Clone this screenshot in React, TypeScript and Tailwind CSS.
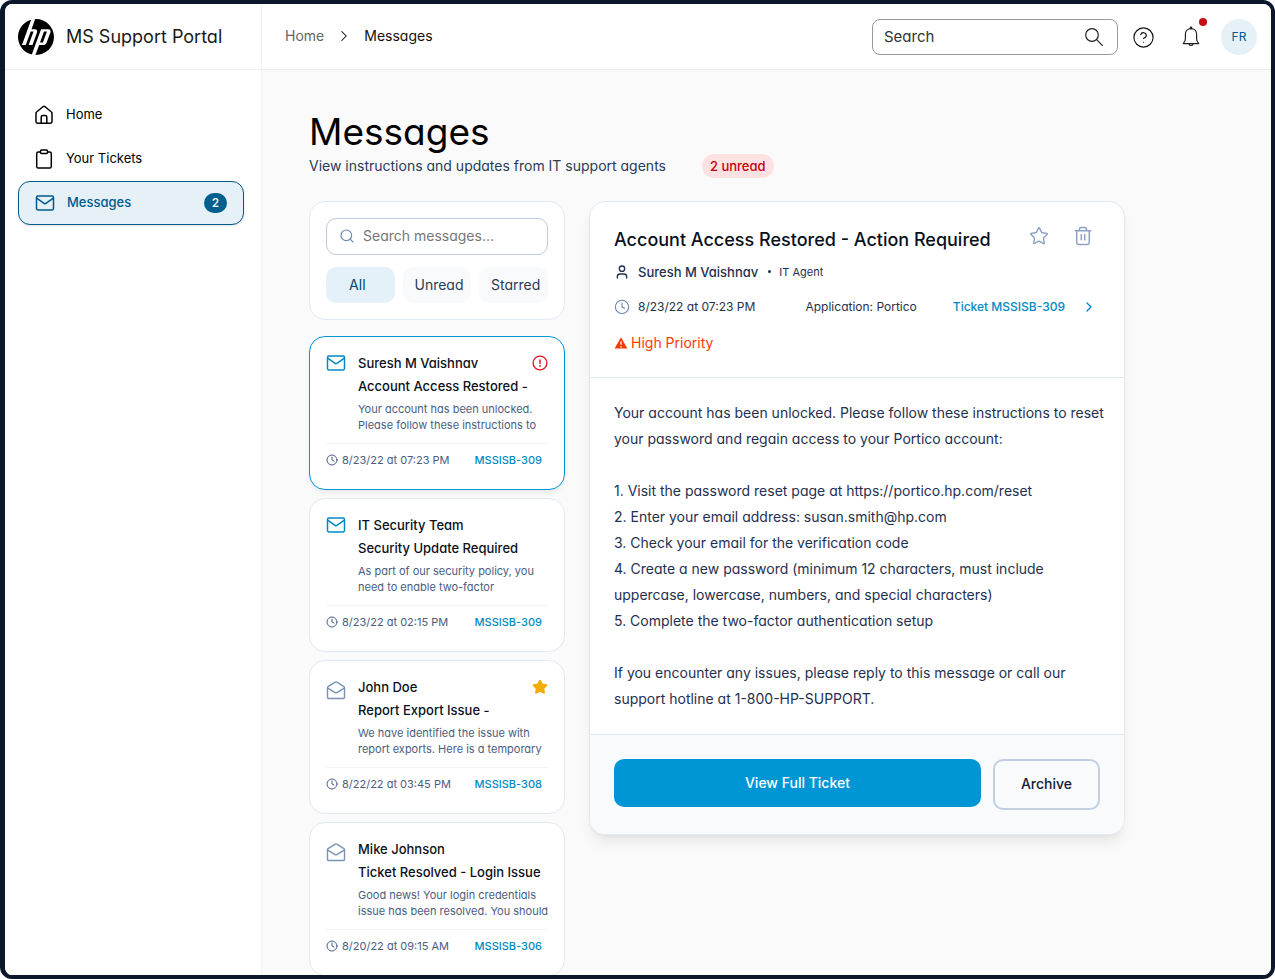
import type { ReactNode } from "react";
import { SiHp } from "react-icons/si";
import { ChevronRight, CircleHelp, Clock, Search, Star, User } from "lucide-react";

type IconProps = { className?: string };

function HomeIcon({ className }: IconProps) {
  return (
    <svg viewBox="0 0 20 20" fill="none" stroke="currentColor" strokeWidth="1.5" strokeLinejoin="round" className={className} aria-hidden="true">
      <path d="M2 8.2c0-.5.2-.9.6-1.2l6.300-5.300c.6-.5 1.500-.5 2.200 0L17.400 7c.4.3.6.7.6 1.200v8.600c0 .8-.6 1.400-1.400 1.400H3.400c-.8 0-1.400-.6-1.400-1.400z" />
      <path d="M7.200 18.200v-6.200c0-.9.7-1.600 1.600-1.600h2.400c.9 0 1.600.7 1.600 1.600v6.200" />
    </svg>
  );
}

function ClipboardIcon({ className }: IconProps) {
  return (
    <svg viewBox="0 0 20 20" fill="none" stroke="currentColor" strokeWidth="1.5" strokeLinejoin="round" className={className} aria-hidden="true">
      <path d="M6.500 3H4.300C3.400 3 2.700 3.700 2.700 4.600v12.800c0 .9.7 1.600 1.600 1.600h11.400c.9 0 1.600-.7 1.600-1.600V4.600c0-.9-.7-1.600-1.600-1.600h-2.200" />
      <rect x="6.500" y="1" width="7" height="3.600" rx="1" />
    </svg>
  );
}

function MailIcon({ className }: IconProps) {
  return (
    <svg viewBox="0 0 20 20" fill="none" stroke="currentColor" strokeWidth="1.5" strokeLinejoin="round" className={className} aria-hidden="true">
      <rect x="1.500" y="3" width="17" height="14" rx="1.400" />
      <path d="m1.600 5.200 7.500 5.200c.5.4 1.200.4 1.800 0l7.500-5.200" />
    </svg>
  );
}

function MailOpenIcon({ className }: IconProps) {
  return (
    <svg viewBox="0 0 20 20" fill="none" stroke="currentColor" strokeWidth="1.4" strokeLinejoin="round" className={className} aria-hidden="true">
      <path d="M1.500 7.800c0-.6.3-1.100.9-1.400l6.900-4.300c.5-.3 1-.3 1.500 0l6.800 4.300c.6.3.9.8.9 1.400v9.500c0 .7-.5 1.200-1.200 1.200H2.700c-.7 0-1.200-.5-1.200-1.200z" />
      <path d="m1.800 8.200 7.300 4.400c.6.3 1.200.3 1.800 0l7.300-4.400" />
    </svg>
  );
}

function TrashIcon({ className }: IconProps) {
  return (
    <svg viewBox="0 0 20 20" fill="none" stroke="currentColor" strokeWidth="1.5" strokeLinecap="round" strokeLinejoin="round" className={className} aria-hidden="true">
      <path d="M2.400 4.800h15.200M3.700 4.800v12c0 .9.7 1.600 1.600 1.600h9.400c.9 0 1.600-.7 1.600-1.600v-12M6.500 4.600V3c0-.9.7-1.600 1.600-1.600h3.800c.9 0 1.600.7 1.600 1.600v1.600M8.300 8.800v5M11.700 8.800v5" />
    </svg>
  );
}

function BellIcon({ className }: IconProps) {
  return (
    <svg viewBox="0 0 20 22" fill="none" stroke="currentColor" strokeWidth="1.2" strokeLinejoin="round" className={className} aria-hidden="true">
      <path d="M10 2.600C6.700 2.600 4.400 5 4.400 8.200v4.600c0 1.500-.6 2.900-1.700 4.100l-.4.700h15.400l-.4-.7c-1.100-1.200-1.700-2.600-1.700-4.100V8.200c0-3.200-2.300-5.600-5.600-5.600z" />
      <path d="M8 18c.3 1 1 1.500 2 1.500s1.700-.5 2-1.500" />
      <circle cx="10" cy="2" r=".8" fill="currentColor" />
    </svg>
  );
}

function AlertCircle({ className }: IconProps) {
  return (
    <svg viewBox="0 0 16 16" fill="none" stroke="currentColor" className={className} role="img" aria-label="High priority">
      <circle cx="8" cy="8" r="6.900" strokeWidth="1.3" />
      <path d="M8 4.400v4.400" strokeWidth="1.5" />
      <circle cx="8" cy="10.900" r=".9" fill="currentColor" stroke="none" />
    </svg>
  );
}

function WarningIcon({ className }: IconProps) {
  return (
    <svg viewBox="0 0 14 14" className={className} aria-hidden="true">
      <path d="M7 1.300 13.400 12.600H.6z" fill="currentColor" />
      <path d="M7 5.200v3.600M7 10v1.400" stroke="white" strokeWidth="1.2" />
    </svg>
  );
}

type Message = {
  sender: string;
  subject: string;
  excerpt: [string, string];
  date: string;
  ticket: string;
  unread?: boolean;
  selected?: boolean;
  flag?: "alert" | "star";
};

const messages: Message[] = [
  {
    sender: "Suresh M Vaishnav",
    subject: "Account Access Restored -",
    excerpt: ["Your account has been unlocked.", "Please follow these instructions to"],
    date: "8/23/22 at 07:23 PM",
    ticket: "MSSISB-309",
    unread: true,
    selected: true,
    flag: "alert",
  },
  {
    sender: "IT Security Team",
    subject: "Security Update Required",
    excerpt: ["As part of our security policy, you", "need to enable two-factor"],
    date: "8/23/22 at 02:15 PM",
    ticket: "MSSISB-309",
    unread: true,
  },
  {
    sender: "John Doe",
    subject: "Report Export Issue -",
    excerpt: ["We have identified the issue with", "report exports. Here is a temporary"],
    date: "8/22/22 at 03:45 PM",
    ticket: "MSSISB-308",
    flag: "star",
  },
  {
    sender: "Mike Johnson",
    subject: "Ticket Resolved - Login Issue",
    excerpt: ["Good news! Your login credentials", "issue has been resolved. You should"],
    date: "8/20/22 at 09:15 AM",
    ticket: "MSSISB-306",
  },
];

const body = [
  "Your account has been unlocked. Please follow these instructions to reset",
  "your password and regain access to your Portico account:",
  "",
  "1. Visit the password reset page at https://portico.hp.com/reset",
  "2. Enter your email address: susan.smith@hp.com",
  "3. Check your email for the verification code",
  "4. Create a new password (minimum 12 characters, must include",
  "uppercase, lowercase, numbers, and special characters)",
  "5. Complete the two-factor authentication setup",
  "",
  "If you encounter any issues, please reply to this message or call our",
  "support hotline at 1-800-HP-SUPPORT.",
].join("\n");

function MessageCard({ message }: { message: Message }) {
  return (
    <li
      className={
        message.selected
          ? "rounded-2xl border border-[#0096d6] bg-white px-4 pt-4 pb-[21px] shadow-md shadow-black/5"
          : "rounded-2xl border border-slate-200 bg-white px-4 pt-4 pb-[21px]"
      }
    >
      <div className="flex items-start gap-3">
        {message.unread ? (
          <MailIcon className="size-5 shrink-0 text-[#0089c4]" />
        ) : (
          <MailOpenIcon className="mt-[3px] size-5 shrink-0 text-[#7a93b5]" />
        )}
        <div className="min-w-0 grow whitespace-nowrap">
          <div className="flex items-center justify-between">
            <h3 className="text-[13px] leading-5 font-medium text-[#0b1020]">{message.sender}</h3>
            {message.flag === "alert" && <AlertCircle className="size-4 text-[#e0101a]" />}
            {message.flag === "star" && <Star className="size-4 fill-[#f2ad00] text-[#f2ad00]" />}
          </div>
          <p className="mt-[3px] text-[13px] leading-5 font-medium text-[#0b1020]">{message.subject}</p>
          <p className="mt-[5px] text-[11px] leading-4 text-[#4a5d80]">
            {message.excerpt[0]}
            <br />
            {message.excerpt[1]}
          </p>
        </div>
      </div>
      <div className="mt-2.5 flex items-center justify-between border-t border-slate-100 pt-2 pr-1.5 text-[11px] leading-4 whitespace-nowrap">
        <span className="flex items-center gap-1 text-[#4a5d80]">
          <Clock className="size-3" strokeWidth={2} />
          {message.date}
        </span>
        <a href="#ticket" className="font-medium text-[#0089c4]">
          {message.ticket}
        </a>
      </div>
    </li>
  );
}

function NavItem({ icon, label, active, count }: { icon: ReactNode; label: string; active?: boolean; count?: number }) {
  return (
    <a
      href="#nav"
      aria-current={active ? "page" : undefined}
      className={
        active
          ? "flex h-11 items-center gap-3 rounded-xl border border-[#00598c] bg-[#e6f1f7] px-4 text-[13px] font-medium text-[#00598c] shadow-sm"
          : "flex h-11 items-center gap-3 rounded-xl px-4 text-[13px] text-black"
      }
    >
      {icon}
      <span className="grow">{label}</span>
      {count !== undefined && (
        <span className="flex h-5 w-[23px] items-center justify-center rounded-full bg-[#005f8c] text-xs text-white">{count}</span>
      )}
    </a>
  );
}

function Sidebar() {
  return (
    <aside className="w-[257px] shrink-0 border-r border-[#f2f2f2] bg-white">
      <div className="flex h-[66px] items-center gap-3 border-b border-[#f2f2f2] pl-[13px]">
        <SiHp className="size-9" aria-label="HP" />
        <span className="text-lg whitespace-nowrap text-[#1a1a1a]">MS Support Portal</span>
      </div>
      <nav className="pt-[23px] pr-[17px] pl-[13px]">
        <NavItem icon={<HomeIcon className="size-5" />} label="Home" />
        <NavItem icon={<ClipboardIcon className="size-5" />} label="Your Tickets" />
        <NavItem icon={<MailIcon className="size-5" />} label="Messages" active count={2} />
      </nav>
    </aside>
  );
}

function TopBar() {
  return (
    <header className="flex h-[66px] items-center border-b border-[#ececec] bg-white pr-[14px] pl-[23px]">
      <nav aria-label="Breadcrumb" className="flex items-center gap-[11px] text-sm">
        <a href="#home" className="text-[#666]">
          Home
        </a>
        <ChevronRight className="size-[18px] text-black" strokeWidth={1.4} />
        <span className="text-[#111]">Messages</span>
      </nav>
      <div className="ml-auto flex items-center pt-0.5">
        <label className="flex h-9 w-[246px] items-center rounded-lg border border-[#999] pr-[13px] pl-[11px]">
          <input
            type="search"
            aria-label="Search"
            placeholder="Search"
            className="min-w-0 grow bg-transparent text-[15px] text-[#333] outline-none placeholder:text-[#333]"
          />
          <svg viewBox="0 0 20 20" fill="none" stroke="#222" strokeWidth="1.2" className="size-5 shrink-0" aria-hidden="true">
            <circle cx="8" cy="8" r="6.300" />
            <path d="m12.600 12.600 6.200 6.200" />
          </svg>
        </label>
        <button aria-label="Help" className="ml-[14px]">
          <CircleHelp className="size-[23px] text-[#111]" strokeWidth={1.2} />
        </button>
        <button aria-label="Notifications" className="relative ml-6">
          <BellIcon className="h-[22px] w-6 text-[#222]" />
          <span className="absolute -top-2 -right-1 size-2 rounded-full bg-[#c40d12]" />
        </button>
        <button className="ml-[18px] flex size-9 items-center justify-center rounded-full bg-[#e6f1f7] text-xs text-[#00598c]">FR</button>
      </div>
    </header>
  );
}

function FilterPanel() {
  return (
    <section className="rounded-2xl border border-slate-200 bg-white p-4">
      <label className="flex h-[37px] items-center gap-2 rounded-[10px] border border-[#bccbe0] px-3">
        <Search className="size-4 shrink-0 text-[#6b86b0]" strokeWidth={1.7} />
        <input
          type="search"
          aria-label="Search messages"
          placeholder="Search messages..."
          className="min-w-0 grow bg-transparent text-sm outline-none placeholder:text-[#777]"
        />
      </label>
      <div className="mt-3 grid grid-cols-3 gap-2 text-sm leading-5">
        <button className="h-9 rounded-[10px] bg-[#e5f1f8] pr-1.5 text-[#00467a]">All</button>
        <button className="h-9 rounded-[10px] bg-slate-50 pl-1 text-[#2b3a55]">Unread</button>
        <button className="h-9 rounded-[10px] bg-slate-50 pl-1 text-[#2b3a55]">Starred</button>
      </div>
    </section>
  );
}

function MessageDetail() {
  return (
    <article className="overflow-hidden rounded-2xl border border-slate-200 bg-white text-[#1f3050] shadow-lg shadow-black/8">
      <div className="border-b border-slate-200 px-6 pt-6 pb-6">
        <div className="flex items-center justify-between">
          <h2 className="text-lg leading-6 font-medium text-[#0b1020]">Account Access Restored - Action Required</h2>
          <div className="flex gap-6 pr-[7px] pb-2 text-[#8ba0c2]">
            <button aria-label="Star message">
              <Star className="size-5" strokeWidth={1.7} />
            </button>
            <button aria-label="Delete message">
              <TrashIcon className="size-5" />
            </button>
          </div>
        </div>
        <div className="mt-2 flex items-center gap-2 text-[13px] leading-5">
          <User className="size-4" strokeWidth={2} />
          <span className="font-medium">Suresh M Vaishnav</span>
          <span className="flex items-center gap-2 text-[11px]">
            <span className="ml-0.5 size-[3px] rounded-full bg-[#1f3050]" />
            IT Agent
          </span>
        </div>
        <div className="mt-[15px] flex items-center text-xs leading-5">
          <Clock className="mr-2 size-4 text-[#6b86b0]" strokeWidth={1.6} />
          <span>8/23/22 at 07:23 PM</span>
          <span className="ml-auto">Application: Portico</span>
          <a href="#ticket" className="ml-9 flex items-center gap-4 pr-[3px] font-medium text-[#0089c4]">
            Ticket MSSISB-309
            <ChevronRight className="size-4" strokeWidth={2} />
          </a>
        </div>
        <p className="mt-4 flex items-center gap-[3px] text-sm leading-5 text-[#f73b05]">
          <WarningIcon className="size-[14px]" />
          High Priority
        </p>
      </div>
      <p className="py-[22px] pr-3 pl-6 text-sm leading-[26px] whitespace-pre-line">{body}</p>
      <div className="flex items-start gap-3 border-t border-slate-200 bg-slate-50 p-6">
        <button className="h-12 grow rounded-[10px] bg-[#0096d6] text-sm font-medium text-white">View Full Ticket</button>
        <button className="h-[51px] rounded-[10px] border-2 border-[#c2cfe2] px-[26px] text-sm font-medium text-[#14203a]">Archive</button>
      </div>
    </article>
  );
}

export default function App() {
  return (
    <div className="h-screen bg-white font-['Inter',sans-serif] [font-feature-settings:'cv11']">
      <div className="flex h-full overflow-hidden rounded-xl border-4 border-l-[5px] border-[#0d172b] bg-white">
        <Sidebar />
        <div className="flex min-w-0 grow flex-col">
          <TopBar />
          <main className="min-h-0 grow overflow-hidden bg-[#fafafa] px-[47px] pt-10">
            <div className="max-w-[816px]">
              <h1 className="text-[37px] leading-[44px] text-black">Messages</h1>
              <div className="flex items-center gap-9">
                <p className="text-sm leading-6 text-[#2b3a55]">View instructions and updates from IT support agents</p>
                <span className="rounded-full bg-[#fee2e2] px-2 text-[13px] leading-6 font-medium text-[#c4000c]">2 unread</span>
              </div>
              <div className="mt-[23px] grid grid-cols-[256px_minmax(0,1fr)] items-start gap-6">
                <div className="flex flex-col gap-4">
                  <FilterPanel />
                  <ul className="flex flex-col gap-2">
                    {messages.map((message) => (
                      <MessageCard key={message.sender} message={message} />
                    ))}
                  </ul>
                </div>
                <MessageDetail />
              </div>
            </div>
          </main>
        </div>
      </div>
    </div>
  );
}
